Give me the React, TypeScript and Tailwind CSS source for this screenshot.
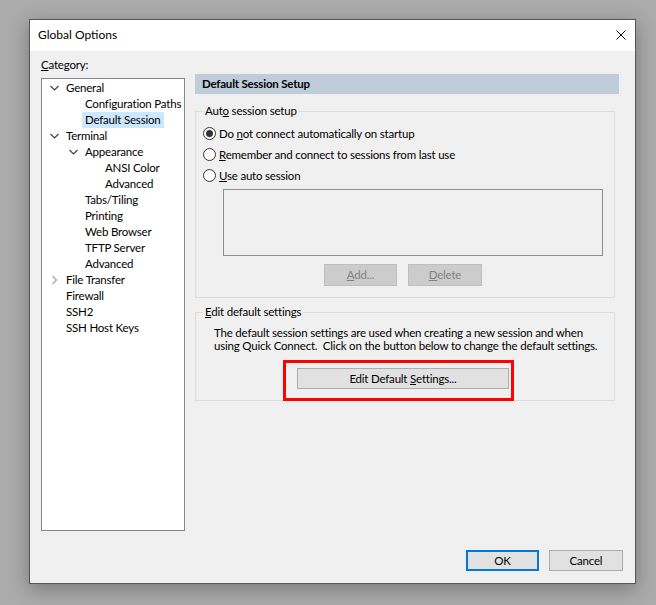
import React from "react";

type Item = { label: React.ReactNode; level: 0 | 1 | 2; chevron?: "down" | "right"; selected?: boolean };

const items: Item[] = [
  { label: "General", level: 0, chevron: "down" },
  { label: "Configuration Paths", level: 1 },
  { label: "Default Session", level: 1, selected: true },
  { label: "Terminal", level: 0, chevron: "down" },
  { label: "Appearance", level: 1, chevron: "down" },
  { label: "ANSI Color", level: 2 },
  { label: "Advanced", level: 2 },
  { label: "Tabs/Tiling", level: 1 },
  { label: "Printing", level: 1 },
  { label: "Web Browser", level: 1 },
  { label: "TFTP Server", level: 1 },
  { label: "Advanced", level: 1 },
  { label: "File Transfer", level: 0, chevron: "right" },
  { label: "Firewall", level: 0 },
  { label: "SSH2", level: 0 },
  { label: "SSH Host Keys", level: 0 },
];

function Chevron({ dir }: { dir?: "down" | "right" }) {
  if (dir === "down")
    return (
      <svg width="9" height="16" viewBox="0 0 9 16" className="shrink-0">
        <polyline points="0.5,6 4.5,10 8.5,6" fill="none" stroke="#404040" strokeWidth="1.2" />
      </svg>
    );
  if (dir === "right")
    return (
      <svg width="9" height="16" viewBox="0 0 9 16" className="shrink-0">
        <polyline points="2.5,4 6.5,8 2.5,12" fill="none" stroke="#a6a6a6" strokeWidth="1.2" />
      </svg>
    );
  return <span className="w-[9px] shrink-0" />;
}

function TreeRow({ item }: { item: Item }) {
  const pad = item.level === 0 ? "pl-[8px]" : item.level === 1 ? "pl-[27px]" : "pl-[47px]";
  return (
    <div className={`h-[16px] flex items-center ${pad}`}>
      <Chevron dir={item.chevron} />
      <span
        className={`ml-[4px] px-[3px] h-[16px] leading-[16px] whitespace-nowrap ${
          item.selected ? "bg-[#cce8ff]" : ""
        }`}
      >
        {item.label}
      </span>
    </div>
  );
}

function Radio({ checked, children }: { checked?: boolean; children: React.ReactNode }) {
  return (
    <div className="h-[21px] flex items-center pl-[7px]">
      <span className="w-[13px] h-[13px] rounded-full border border-[#333333] bg-white flex items-center justify-center shrink-0">
        {checked && <span className="w-[7px] h-[7px] rounded-full bg-[#333333]" />}
      </span>
      <span className="ml-[3px] whitespace-nowrap">{children}</span>
    </div>
  );
}

export default function App() {
  return (
    <div
      className="w-[656px] h-[605px] bg-[#ababab] pt-[19px] pl-[29px] text-[11.5px] tracking-[-0.2px] text-black"
      style={{ fontFamily: 'Lato, "Noto Sans", sans-serif' }}
    >
      <div className="w-[607px] h-[565px] border border-[#555555] bg-[#f0f0f0] flex flex-col shadow-[0_5px_18px_rgba(0,0,0,0.3)]">
        {/* Title bar */}
        <div className="h-[31px] bg-white flex items-center justify-between pl-[8px] pr-[9px] pb-[2px] shrink-0">
          <span className="text-[12px] tracking-normal">Global Options</span>
          <svg width="10" height="10" viewBox="0 0 10 10">
            <path d="M0.5 0.5 L9.5 9.5 M9.5 0.5 L0.5 9.5" stroke="#000" strokeWidth="1" fill="none" />
          </svg>
        </div>

        {/* Client */}
        <div className="flex-1 flex flex-col px-[11px]">
          <div className="flex">
            {/* Left column */}
            <div className="w-[144px] flex flex-col pt-[6px]">
              <div className="h-[16px] leading-[16px]">
                <u>C</u>ategory:
              </div>
              <div className="mt-[5px] h-[453px] bg-white border border-[#828790] pt-[1px]">
                {items.map((it, i) => (
                  <TreeRow key={i} item={it} />
                ))}
              </div>
            </div>

            {/* Right column */}
            <div className="ml-[10px] w-[424px] pt-[23px]">
              <div className="h-[20px] bg-[#bfcddb] flex items-center pl-[7px] font-bold">
                Default Session Setup
              </div>

              <fieldset className="mt-[9px] w-[420px] border border-[#dcdcdc] m-0 p-0 pb-[11px]">
                <legend className="ml-[7px] px-[2px] h-[16px] leading-[16px]">
                  Aut<u>o</u> session setup
                </legend>
                <div className="pt-[4px]">
                  <Radio checked>
                    Do <u>n</u>ot connect automatically on startup
                  </Radio>
                  <Radio>
                    <u>R</u>emember and connect to sessions from last use
                  </Radio>
                  <Radio>
                    <u>U</u>se auto session
                  </Radio>
                </div>
                <div className="mt-[3px] ml-[27px] w-[380px] h-[67px] border border-[#8f8f8f] bg-[#f0f0f0]" />
                <div className="mt-[8px] ml-[128px] flex gap-[11px]">
                  <div className="w-[73px] h-[22px] bg-[#cccccc] border border-[#bfbfbf] text-[#838383] flex items-center justify-center">
                    <span>
                      <u>A</u>dd...
                    </span>
                  </div>
                  <div className="w-[74px] h-[22px] bg-[#cccccc] border border-[#bfbfbf] text-[#838383] flex items-center justify-center">
                    <span>
                      <u>D</u>elete
                    </span>
                  </div>
                </div>
              </fieldset>

              <fieldset className="mt-[6px] w-[420px] border border-[#dcdcdc] m-0 p-0 pb-[11px]">
                <legend className="ml-[7px] px-[2px] h-[16px] leading-[16px]">
                  <u>E</u>dit default settings
                </legend>
                <div className="mt-[6px] pl-[18px] leading-[13px] whitespace-pre">
                  <div>The default session settings are used when creating a new session and when</div>
                  <div>using Quick Connect.  Click on the button below to change the default settings.</div>
                </div>
                <div className="mt-[16px] ml-[101px] w-[212px] h-[21px] relative">
                  <div className="w-full h-full bg-[#e1e1e1] border border-[#adadad] flex items-center justify-center">
                    <span>
                      Edit Default <u>S</u>ettings...
                    </span>
                  </div>
                  <div className="absolute -left-[14px] -top-[8px] -right-[5px] -bottom-[12px] border-[3px] border-[#ff0000] pointer-events-none" />
                </div>
              </fieldset>
            </div>
          </div>

          {/* Footer */}
          <div className="mt-auto mb-[12px] flex justify-end gap-[10px] pr-[1px]">
            <div className="w-[73px] h-[21px] bg-[#e1e1e1] border-2 border-[#0078d7] flex items-center justify-center">
              OK
            </div>
            <div className="w-[74px] h-[21px] bg-[#e1e1e1] border border-[#adadad] flex items-center justify-center">
              Cancel
            </div>
          </div>
        </div>
      </div>
    </div>
  );
}
